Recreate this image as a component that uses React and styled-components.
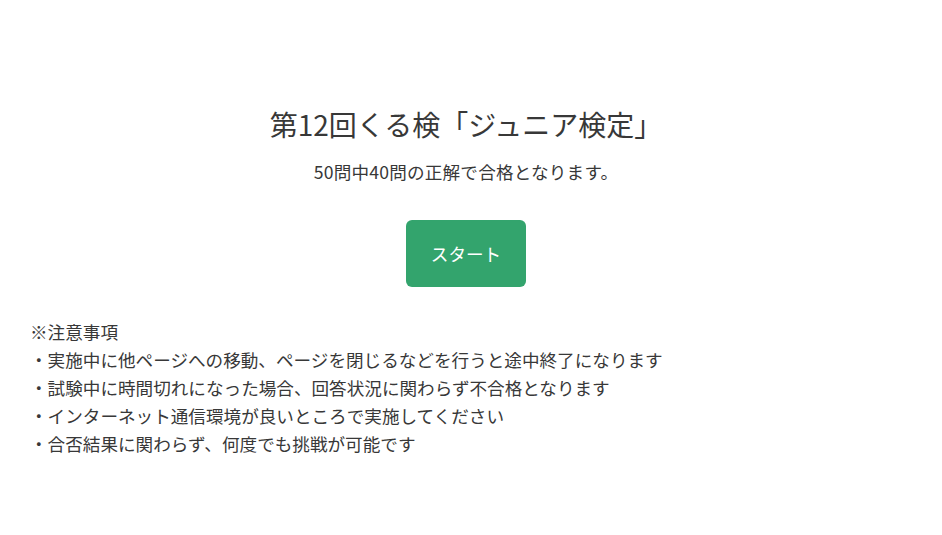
import React from "react";
import styled, { createGlobalStyle } from "styled-components";

const Global = createGlobalStyle`
  html, body { margin: 0; padding: 0; background: #fff; }
  body {
    font-family: "Noto Sans CJK JP", "Noto Sans", sans-serif;
    color: #383838;
  }
`;

const Page = styled.main`
  display: flex;
  flex-direction: column;
  padding: 103px 40px 0 30px;
`;

const Hero = styled.section`
  display: flex;
  flex-direction: column;
  align-items: center;
`;

const Title = styled.h1`
  margin: 0;
  font-size: 28px;
  font-weight: 400;
  line-height: 42px;
`;

const Lead = styled.p`
  margin: 13px 0 0;
  font-size: 17.6px;
  line-height: 28px;
  letter-spacing: 0.2px;
`;

const StartButton = styled.button`
  margin-top: 34px;
  width: 120px;
  height: 67px;
  border: none;
  border-radius: 6px;
  background: #33a46d;
  color: #fff;
  font-family: inherit;
  font-size: 17.6px;
  cursor: pointer;
`;

const Notes = styled.div`
  margin-top: 31px;
  font-size: 17.6px;
  line-height: 28px;
`;

const NoteLine = styled.div``;

const notes = [
  "※注意事項",
  "・実施中に他ページへの移動、ページを閉じるなどを行うと途中終了になります",
  "・試験中に時間切れになった場合、回答状況に関わらず不合格となります",
  "・インターネット通信環境が良いところで実施してください",
  "・合否結果に関わらず、何度でも挑戦が可能です",
];

export default function App() {
  return (
    <>
      <Global />
      <Page>
        <Hero>
          <Title>第12回くる検「ジュニア検定」</Title>
          <Lead>50問中40問の正解で合格となります。</Lead>
          <StartButton>スタート</StartButton>
        </Hero>
        <Notes>
          {notes.map((n) => (
            <NoteLine key={n}>{n}</NoteLine>
          ))}
        </Notes>
      </Page>
    </>
  );
}
